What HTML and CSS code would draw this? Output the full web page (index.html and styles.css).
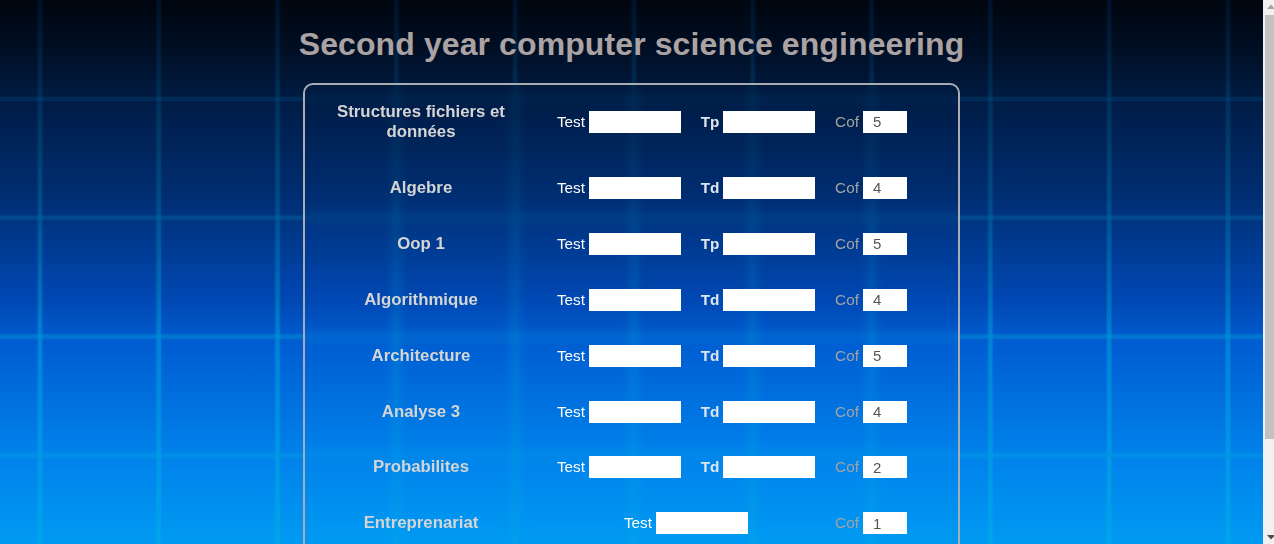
FILE: index.html
```html
<!DOCTYPE html>
<html>
<head>
<meta charset="UTF-8">
<title>Second year computer science engineering</title>
<link rel="stylesheet" href="styles.css">
</head>
<body>
<div class="page">
<h1 class="title">Second year computer science engineering</h1>
<form class="box">
	<div class="row first">
		<div class="name">Structures fichiers et données</div>
		<div class="cell"><label for="t1">Test</label><input id="t1" type="text"></div>
		<div class="cell"><label class="bold" for="p1">Tp</label><input id="p1" type="text"></div>
		<div class="cell"><label class="cof">Cof</label><input class="small" type="text" value="5"></div>
	</div>
	<div class="row">
		<div class="name">Algebre</div>
		<div class="cell"><label for="t2">Test</label><input id="t2" type="text"></div>
		<div class="cell"><label class="bold" for="p2">Td</label><input id="p2" type="text"></div>
		<div class="cell"><label class="cof">Cof</label><input class="small" type="text" value="4"></div>
	</div>
	<div class="row">
		<div class="name">Oop 1</div>
		<div class="cell"><label for="t3">Test</label><input id="t3" type="text"></div>
		<div class="cell"><label class="bold" for="p3">Tp</label><input id="p3" type="text"></div>
		<div class="cell"><label class="cof">Cof</label><input class="small" type="text" value="5"></div>
	</div>
	<div class="row">
		<div class="name">Algorithmique</div>
		<div class="cell"><label for="t4">Test</label><input id="t4" type="text"></div>
		<div class="cell"><label class="bold" for="p4">Td</label><input id="p4" type="text"></div>
		<div class="cell"><label class="cof">Cof</label><input class="small" type="text" value="4"></div>
	</div>
	<div class="row">
		<div class="name">Architecture</div>
		<div class="cell"><label for="t5">Test</label><input id="t5" type="text"></div>
		<div class="cell"><label class="bold" for="p5">Td</label><input id="p5" type="text"></div>
		<div class="cell"><label class="cof">Cof</label><input class="small" type="text" value="5"></div>
	</div>
	<div class="row">
		<div class="name">Analyse 3</div>
		<div class="cell"><label for="t6">Test</label><input id="t6" type="text"></div>
		<div class="cell"><label class="bold" for="p6">Td</label><input id="p6" type="text"></div>
		<div class="cell"><label class="cof">Cof</label><input class="small" type="text" value="4"></div>
	</div>
	<div class="row">
		<div class="name">Probabilites</div>
		<div class="cell"><label for="t7">Test</label><input id="t7" type="text"></div>
		<div class="cell"><label class="bold" for="p7">Td</label><input id="p7" type="text"></div>
		<div class="cell"><label class="cof">Cof</label><input class="small" type="text" value="2"></div>
	</div>
	<div class="row">
		<div class="name">Entreprenariat</div>
		<div class="cell wide"><label for="t8">Test</label><input id="t8" type="text"></div>
		<div class="cell"><label class="cof">Cof</label><input class="small" type="text" value="1"></div>
	</div>
</form>
</div>
<div class="scrollbar">
	<svg class="arrow" width="11" height="15" viewBox="0 0 11 15"><path d="M8 4.5l4 4.5h-8z" fill="#a3a3a3"/></svg>
	<div class="thumb"></div>
	<div class="track"></div>
	<svg class="arrow" width="11" height="15" viewBox="0 0 11 15"><path d="M8 10.5l-4-4.5h8z" fill="#505050"/></svg>
</div>
</body>
</html>
```
FILE: styles.css
```css
html, body {
	height: 100%;
	margin: 0;
	overflow: hidden;
}

body {
	display: flex;
	font-family: "Liberation Sans", Arial, sans-serif;
}

.page {
	flex: 1;
	min-width: 0;
	overflow: hidden;
	background-color: #009af2;
	background-image:
		linear-gradient(90deg, transparent 37px, rgba(0,60,180,.16) 38.5px, rgba(0,60,180,.16) 41.5px, transparent 43px),
		linear-gradient(180deg, transparent 16px, rgba(0,60,180,.14) 17.5px, rgba(0,60,180,.14) 20.5px, transparent 22px),
		linear-gradient(180deg, rgba(0,0,0,.93) 0, rgba(0,0,0,.82) 50px, rgba(0,0,0,.66) 100px, rgba(0,0,0,.42) 200px, rgba(0,0,0,.1) 300px, rgba(0,0,0,0) 340px),
		linear-gradient(90deg, #000 37px, rgb(0,80,70) 38.5px, rgb(0,80,70) 41.5px, #000 43px),
		linear-gradient(180deg, #000 16px, rgb(0,56,50) 17.5px, rgb(0,56,50) 20.5px, #000 22px),
		linear-gradient(180deg, #0050c8 0, #0050c8 300px, #005cd0 340px, #0080ea 450px, #009af2 544px);
	background-size: 118.8px 100%, 100% 118.8px, 100% 544px, 118.8px 100%, 100% 118.8px, 100% 544px;
	background-position: 0 0, 0 80px, 0 0, 0 0, 0 80px, 0 0;
	background-repeat: repeat-x, repeat-y, no-repeat, repeat-x, repeat-y, no-repeat;
	background-blend-mode: normal, normal, normal, screen, screen, normal;
}

.title {
	box-sizing: border-box;
	height: 83px;
	margin: 0;
	padding-top: 25px;
	line-height: 38px;
	text-align: center;
	font-size: 32px;
	letter-spacing: .1px;
	font-weight: bold;
	color: #aba3a3;
}

.box {
	box-sizing: border-box;
	width: 657px;
	height: 557px;
	margin: 0 auto;
	padding: 0 16px;
	border: 2px solid #a9adb2;
	border-radius: 10px;
	-webkit-backdrop-filter: blur(5px);
	backdrop-filter: blur(5px);
}

.row {
	display: grid;
	grid-template-columns: 226px 144px 134px 92px;
	align-items: center;
	height: 55.9px;
}

.row.first {
	box-sizing: border-box;
	height: 75px;
	padding-bottom: 2px;
}

.name {
	padding-right: 26px;
	text-align: center;
	font-size: 16.8px;
	line-height: 20px;
	font-weight: bold;
	color: #d5d5d5;
}

.cell {
	display: flex;
	justify-content: center;
	align-items: center;
	gap: 4px;
	font-size: 15.3px;
	color: #fff;
}

.cell.wide {
	grid-column: span 2;
}

.cell .bold {
	font-weight: bold;
	color: #dfe5ec;
}

.cell .cof {
	color: #a3a3a3;
}

.cell input {
	box-sizing: border-box;
	width: 92px;
	height: 22px;
	padding: 0 10px;
	border: 0;
	outline: 0;
	border-radius: 0;
	background: #fff;
	font-family: inherit;
	font-size: 15px;
	color: #555;
}

.cell input.small {
	width: 44px;
}

.scrollbar {
	display: flex;
	flex-direction: column;
	flex: 0 0 11px;
	overflow: hidden;
	background: #f1f1f1;
}

.arrow {
	display: block;
	flex: none;
	overflow: hidden;
}

.thumb {
	flex: none;
	height: 424px;
	margin-left: 2px;
	background: #c1c1c1;
}

.track {
	flex: 1;
}
```
